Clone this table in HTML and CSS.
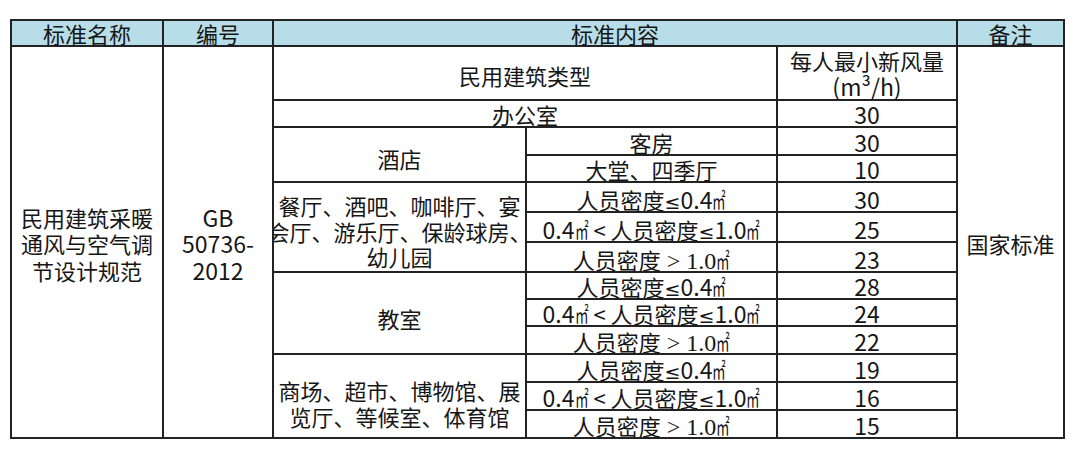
FILE: index.html
```html
<!DOCTYPE html>
<html lang="zh-CN">
<head>
<meta charset="utf-8">
<title>民用建筑新风量标准</title>
<link rel="stylesheet" href="styles.css">
</head>
<body>
<table class="spec">
  <colgroup>
    <col class="c-name">
    <col class="c-code">
    <col class="c-type">
    <col class="c-sub">
    <col class="c-val">
    <col class="c-note">
  </colgroup>
  <thead>
    <tr class="r-head">
      <th>标准名称</th>
      <th>编号</th>
      <th colspan="3">标准内容</th>
      <th>备注</th>
    </tr>
  </thead>
  <tbody>
    <tr class="r-first">
      <td rowspan="13" class="mid big">民用建筑采暖<br>通风与空气调<br>节设计规范</td>
      <td rowspan="13" class="mid big code">GB<br>50736-<br>2012</td>
      <td colspan="2" class="mid first-type">民用建筑类型</td>
      <td class="bottom two">每人最小新风量<br><span class="num">(m³/h)</span></td>
      <td rowspan="13" class="mid note">国家标准</td>
    </tr>
    <tr class="r s"><td colspan="2">办公室</td><td class="num">30</td></tr>
    <tr class="r"><td rowspan="2" class="mid g2">酒店</td><td>客房</td><td class="num">30</td></tr>
    <tr class="r s"><td>大堂、四季厅</td><td class="num">10</td></tr>
    <tr class="r"><td rowspan="3" class="mid g3 clip"><div class="lines">餐厅、酒吧、咖啡厅、宴<br>会厅、游乐厅、保龄球房、<br>幼儿园</div></td><td>人员密度<span class="sym">≤</span><span class="num">0.4</span><span class="sq">㎡</span></td><td class="num">30</td></tr>
    <tr class="r"><td><span class="num">0.4</span><span class="sq">㎡</span> &lt; 人员密度<span class="sym">≤</span><span class="num">1.0</span><span class="sq">㎡</span></td><td class="num">25</td></tr>
    <tr class="r"><td>人员密度<span class="serif"> &gt; 1.0</span><span class="sq">㎡</span></td><td class="num">23</td></tr>
    <tr class="r s"><td rowspan="3" class="mid g3b">教室</td><td>人员密度<span class="sym">≤</span><span class="num">0.4</span><span class="sq">㎡</span></td><td class="num">28</td></tr>
    <tr class="r s"><td><span class="num">0.4</span><span class="sq">㎡</span> &lt; 人员密度<span class="sym">≤</span><span class="num">1.0</span><span class="sq">㎡</span></td><td class="num">24</td></tr>
    <tr class="r"><td>人员密度<span class="serif"> &gt; 1.0</span><span class="sq">㎡</span></td><td class="num">22</td></tr>
    <tr class="r"><td rowspan="3" class="mid g3c">商场、超市、博物馆、展<br>览厅、等候室、体育馆</td><td>人员密度<span class="sym">≤</span><span class="num">0.4</span><span class="sq">㎡</span></td><td class="num">19</td></tr>
    <tr class="r"><td><span class="num">0.4</span><span class="sq">㎡</span> &lt; 人员密度<span class="sym">≤</span><span class="num">1.0</span><span class="sq">㎡</span></td><td class="num">16</td></tr>
    <tr class="r"><td>人员密度<span class="serif"> &gt; 1.0</span><span class="sq">㎡</span></td><td class="num">15</td></tr>
  </tbody>
</table>
</body>
</html>
```

FILE: styles.css
```css
html, body {
  margin: 0;
  padding: 0;
  background: #ffffff;
}

body {
  font-family: "Noto Sans CJK SC", "Noto Sans", sans-serif;
  color: #161616;
}

.spec {
  margin: 19px 0 0 10px;
  border-collapse: collapse;
  table-layout: fixed;
  width: 1053px;
  font-size: 22px;
}

.c-name { width: 152px; }
.c-code { width: 110px; }
.c-type { width: 253px; }
.c-sub  { width: 251px; }
.c-val  { width: 180px; }
.c-note { width: 107px; }

.spec th,
.spec td {
  border: 2px solid #222222;
  padding: 0 0 1px 0;
  text-align: center;
  vertical-align: bottom;
  line-height: 22px;
  white-space: nowrap;
  font-weight: normal;
}

.spec th {
  background: #b7dee8;
}

.r-head { height: 26px; }
.r-first { height: 54px; }
.r { height: 28px; }
.r.s { height: 27px; }

.spec td.mid {
  vertical-align: middle;
  line-height: 26px;
}

.spec td.big { padding-top: 4px; line-height: 26.5px; }
.spec td.note { padding-top: 4px; }
.spec td.first-type { padding-top: 4px; }
.spec td.g2 { padding-top: 8px; }
.spec td.g3 { padding-top: 10px; line-height: 25.6px; }
.spec td.g3b { padding-top: 12px; }
.spec td.g3c { padding-top: 16px; line-height: 26.5px; }

.spec td.two { line-height: 26px; padding-bottom: 0; }

.clip { overflow: hidden; }
.lines {
  width: 100%;
  display: flex;
  flex-direction: column;
  align-items: center;
  overflow: hidden;
}

.num {
  font-size: 23px;
}

.spec td .num,
.spec td .sym,
.spec td .serif,
.spec td .sq {
  line-height: 0;
}

.spec td.num,
.spec td.code {
  font-size: 23px;
}

.sym {
  font-family: "DejaVu Sans", sans-serif;
  font-size: 19px;
}

.serif {
  font-family: "Liberation Serif", serif;
  font-size: 24px;
}

.sq {
  display: inline-block;
  width: 14px;
  text-align: left;
  transform: scaleX(0.62);
  transform-origin: left center;
  font-family: "Noto Sans CJK SC", sans-serif;
}
```
